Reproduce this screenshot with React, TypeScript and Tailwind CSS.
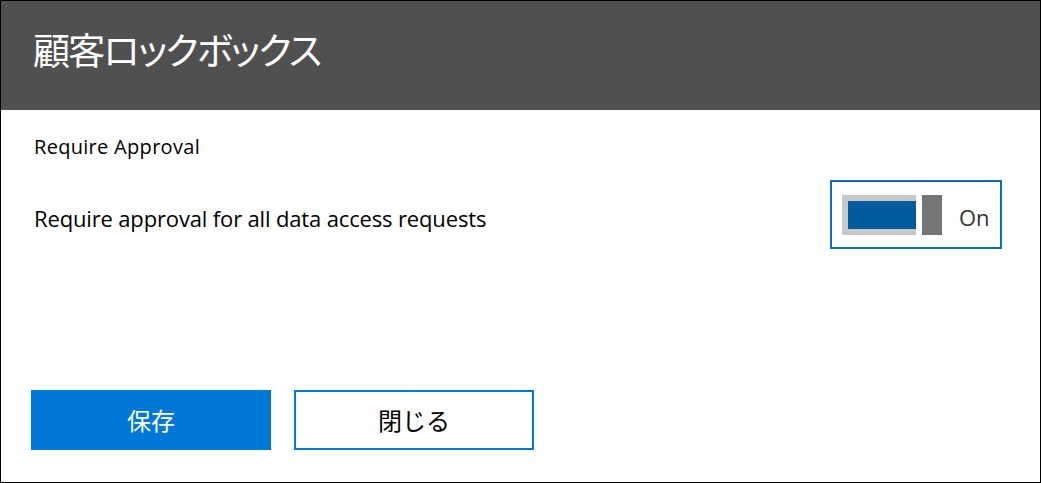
export default function App() {
  return (
    <div
      className="w-[1041px] h-[483px] border border-black bg-white flex flex-col overflow-hidden"
      style={{ fontFamily: '"Open Sans", "Noto Sans CJK JP", sans-serif' }}
    >
      <header className="h-[109px] shrink-0 bg-[#505050] flex items-start pt-[30px] pl-[32px]">
        <h1
          className="text-[37px] leading-none tracking-[-1.7px] text-white font-normal [font-feature-settings:'palt']"
          style={{ fontFamily: '"Noto Sans CJK JP", sans-serif' }}
        >
          顧客ロックボックス
        </h1>
      </header>

      <main className="flex-1 flex flex-col pl-[30px] pr-[38px]">
        <p className="mt-[24px] ml-[3px] text-[20px] leading-[26px] tracking-[0.3px] text-black">
          Require Approval
        </p>

        <div className="mt-[20px] flex items-center justify-between">
          <p className="ml-[3px] pt-[6px] text-[22px] leading-[28px] tracking-[-0.15px] text-black">
            Require approval for all data access requests
          </p>
          <div className="w-[172px] h-[69px] border-2 border-[#0f6cbd] flex items-center pl-[10px]">
            <div className="w-[74px] h-[40px] bg-[#c8c8c8] py-[6px] pl-[6px]">
              <div className="w-full h-full bg-[#005a9e]" />
            </div>
            <div className="ml-[6px] w-[20px] h-[40px] bg-[#767676]" />
            <span className="ml-[17px] pt-[5px] text-[22px] text-[#333333]">On</span>
          </div>
        </div>

        <div className="mt-auto mb-[32px] flex gap-[23px]">
          <button
            className="w-[240px] h-[60px] bg-[#0078d7] text-white text-[24px]"
            style={{ fontFamily: '"Noto Sans CJK JP", sans-serif' }}
          >
            保存
          </button>
          <button
            className="w-[240px] h-[60px] border-2 border-[#0078d7] bg-white text-black text-[24px]"
            style={{ fontFamily: '"Noto Sans CJK JP", sans-serif' }}
          >
            閉じる
          </button>
        </div>
      </main>
    </div>
  );
}
